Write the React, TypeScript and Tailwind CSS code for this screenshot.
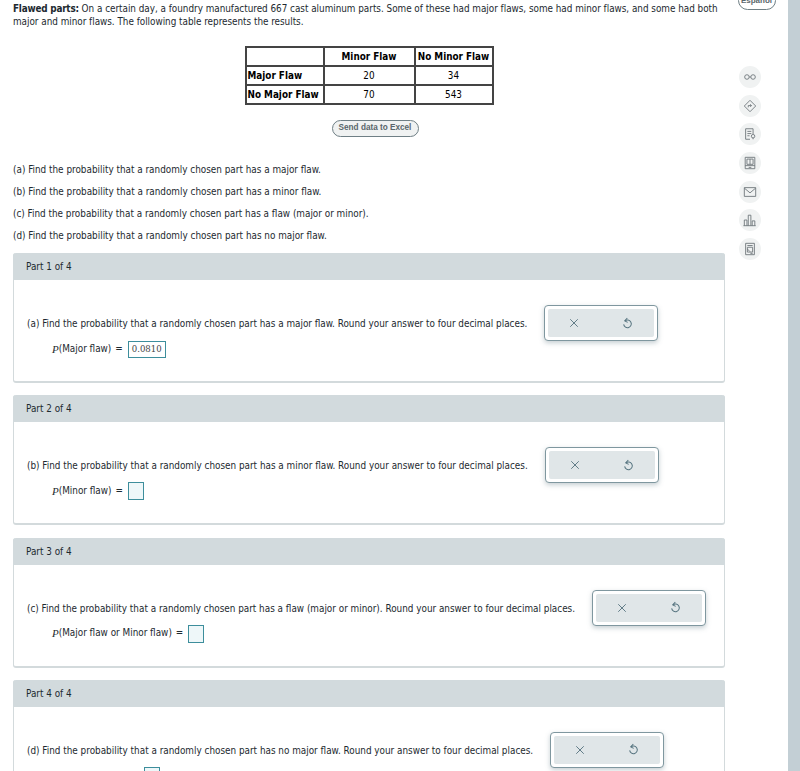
import type { ReactNode } from 'react';

const parts = [
  { label: 'Part 1 of 4', q: '(a) Find the probability that a randomly chosen part has a major flaw. Round your answer to four decimal places.', expr: 'Major flaw', value: '0.0810' },
  { label: 'Part 2 of 4', q: '(b) Find the probability that a randomly chosen part has a minor flaw. Round your answer to four decimal places.', expr: 'Minor flaw', value: '' },
  { label: 'Part 3 of 4', q: '(c) Find the probability that a randomly chosen part has a flaw (major or minor). Round your answer to four decimal places.', expr: 'Major flaw or Minor flaw', value: '' },
  { label: 'Part 4 of 4', q: '(d) Find the probability that a randomly chosen part has no major flaw. Round your answer to four decimal places.', expr: '', value: '' },
];

const questions = [
  '(a) Find the probability that a randomly chosen part has a major flaw.',
  '(b) Find the probability that a randomly chosen part has a minor flaw.',
  '(c) Find the probability that a randomly chosen part has a flaw (major or minor).',
  '(d) Find the probability that a randomly chosen part has no major flaw.',
];

const toolIcons: ReactNode[] = [
  <>
    <circle cx="4.500" cy="8" r="2.600" />
    <circle cx="11.500" cy="8" r="2.600" />
    <path d="M7.100 8h1.800" />
  </>,
  <>
    <path d="M8 1.500 14.500 8 8 14.500 1.500 8Z" />
    <path d="M6 9.500V7.500h3.500M8.300 6l1.400 1.500L8.300 9" />
  </>,
  <>
    <path d="M11.500 8V2H3v12h5" />
    <path d="M5 5h4.500M5 7.500h4.500M5 10h2.500" />
    <circle cx="11.500" cy="10.500" r="2" />
    <path d="M11.500 12.500v1.500" />
  </>,
  <>
    <path d="M2.500 1.500h11v13h-11Z" />
    <path d="M4.500 3.500h7v6h-7ZM8 3.500v6M2.500 11h11M6.500 13h3" />
  </>,
  <>
    <path d="M1.500 3h13v10h-13Z" />
    <path d="m1.500 3.500 6.500 5.500 6.500-5.500" />
  </>,
  <>
    <path d="M1.500 14.500V8h3v6.500M6 14.500V2.500h3v12M10.500 14.500V9h3v5.500M.5 14.500h14" />
  </>,
  <>
    <path d="M3 1.500h10v13H3Z" />
    <path d="M5 4h6M5 6h6v5.500H5ZM5 8l3 3M8.500 13h2.500" />
  </>,
];

function ToolButton({ children }: { children: ReactNode }) {
  return (
    <div className="flex h-[22px] w-[22px] items-center justify-center rounded-full bg-[#f0f2f2]">
      <svg viewBox="0 0 16 16" className="h-[14px] w-[14px]" fill="none" stroke="#6b7478" strokeWidth="1" strokeLinejoin="round">
        {children}
      </svg>
    </div>
  );
}

function ActionBox() {
  return (
    <div className="h-[36px] w-[114px] shrink-0 rounded-[4px] border border-[#7f979f] bg-white p-[3px] shadow-[0_2px_5px_rgba(90,115,125,0.35)]">
      <div className="flex h-full items-center gap-[43px] rounded-[2px] bg-[#e0e6e8] pl-[21px]">
        <svg viewBox="0 0 12 12" className="h-[10px] w-[10px]" fill="none" stroke="#55737f" strokeWidth="1.100">
          <path d="m1.500 1.500 9 9M10.500 1.500l-9 9" />
        </svg>
        <svg viewBox="0 0 12 14" className="h-[13px] w-[11px]" fill="none" stroke="#55737f" strokeWidth="1.100">
          <path d="M3.200 4.200A4.200 4.200 0 1 1 1.800 8" />
          <path d="M5.800 1 3 4.200l3.200 1.600" />
        </svg>
      </div>
    </div>
  );
}

export default function App() {
  return (
    <div className="flex h-[771px] w-[800px] overflow-hidden bg-white font-['DejaVu_Sans_Condensed','DejaVu_Sans',sans-serif] text-[9.850px] text-[#1d2a30] [font-stretch:condensed]">
      <main className="w-[725px] shrink-0 pl-[13px]">
        <p className="w-[712px] pt-[2px] leading-[13px] tracking-[-0.02px]">
          <b className="tracking-[-0.2px]">Flawed parts:</b> On a certain day, a foundry manufactured 667 cast aluminum parts. Some of these had major flaws, some had minor flaws, and some had both major and minor flaws. The following table represents the results.
        </p>

        <div className="mt-[18px] flex justify-center">
          <table className="table-fixed border-collapse border-2 border-[#444] text-center whitespace-nowrap text-black [&_td]:pt-[2px] [&_th]:pt-[2px]">
            <tbody>
              <tr className="h-[19px]">
                <td className="w-[78px] border-2 border-[#444]" />
                <th className="w-[91px] border-2 border-[#444] font-bold">Minor Flaw</th>
                <th className="w-[78px] border-2 border-[#444] font-bold">No Minor Flaw</th>
              </tr>
              <tr className="h-[19px]">
                <th className="border-2 border-[#444] pl-px text-left font-bold">Major Flaw</th>
                <td className="border-2 border-[#444]">20</td>
                <td className="border-2 border-[#444]">34</td>
              </tr>
              <tr className="h-[19px]">
                <th className="border-2 border-[#444] pl-px text-left font-bold">No Major Flaw</th>
                <td className="border-2 border-[#444]">70</td>
                <td className="border-2 border-[#444]">543</td>
              </tr>
            </tbody>
          </table>
        </div>

        <div className="mt-[15px] flex justify-center pl-[12px]">
          <div className="flex h-[17px] w-[87px] items-center justify-center rounded-full border border-[#6f7f85] bg-[#f0f2f2] font-['Liberation_Sans',sans-serif] text-[8.200px] font-bold text-[#5a666b]">
            Send data to Excel
          </div>
        </div>

        <div className="mt-[26px] flex flex-col gap-[9px]">
          {questions.map((q) => (
            <p key={q} className="leading-[13px]">{q}</p>
          ))}
        </div>

        <div className="mt-[11px] flex flex-col gap-[12.330px]">
          {parts.map((part) => (
            <section key={part.label} className="h-[130px] w-[712px] shrink-0 rounded-[3px] border-x border-b-2 border-[#d3dadc]">
              <div className="-mx-px flex h-[27px] items-center rounded-t-[3px] bg-[#d2dadd] pt-[2px] pl-[13px]">{part.label}</div>
              <div className="flex items-start pt-[25px] pl-[13px]">
                <div className="pt-[12px] whitespace-nowrap">
                  <p className="leading-[13px]">{part.q}</p>
                  {part.expr ? (
                    <div className="mt-[10px] flex h-[18px] items-center pl-[25px]">
                      <span className="font-['Liberation_Serif',serif] text-[11px] italic">P</span>
                      <span>({part.expr})</span>
                      <span className="ml-[4px]">=</span>
                      <span className={`ml-[5px] flex items-center border border-[#3d8e9c] px-[3px] font-['DejaVu_Serif',serif] text-[9.500px] text-[#444] ${part.value ? 'h-[17px]' : 'h-[18px] w-[16px] bg-[#eef7f9]'}`}>
                        {part.value}
                      </span>
                    </div>
                  ) : (
                    <div className="mt-[10px] ml-[117px] h-[18px] w-[16px] border border-[#3d8e9c] bg-[#eef7f9]" />
                  )}
                </div>
                <div className="ml-[17px]">
                  <ActionBox />
                </div>
              </div>
            </section>
          ))}
        </div>
      </main>

      <aside className="flex w-[63px] shrink-0 flex-col items-center">
        <div className="-mt-[9px] flex h-[19px] w-[38px] items-center justify-center rounded-full border border-[#6f7f85] font-['Liberation_Sans',sans-serif] text-[8px] font-bold text-[#5a666b]">
          Español
        </div>
        <div className="mt-[56px] -ml-[13px] flex flex-col gap-[6.700px]">
          {toolIcons.map((icon, i) => (
            <ToolButton key={i}>{icon}</ToolButton>
          ))}
        </div>
      </aside>

      <div className="w-[12px] shrink-0 bg-[#c3cfd5]" />
    </div>
  );
}
